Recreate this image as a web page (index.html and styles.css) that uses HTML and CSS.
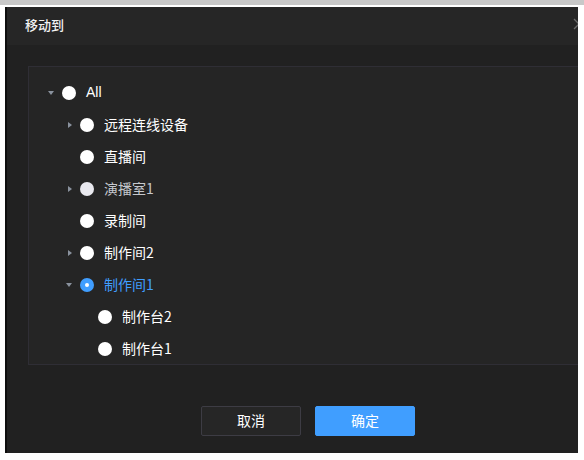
FILE: index.html
```html
<!DOCTYPE html>
<html lang="zh-CN">
<head>
    <meta charset="UTF-8">
    <meta name="viewport" content="width=device-width, initial-scale=1.0">
    <title>移动到</title>
    <link rel="stylesheet" href="styles.css">
</head>
<body>
    <div class="top-bar"></div>
    <div class="dialog">
        <div class="dialog-header">
            <span class="dialog-title">移动到</span>
            <svg class="close-icon" width="12" height="12" viewBox="0 0 12 12">
                <path d="M1 1 L11 11 M11 1 L1 11" stroke="#6b6b6b" stroke-width="1.3" fill="none"/>
            </svg>
        </div>
        <div class="dialog-body">
            <div class="tree">
                <div class="tree-node level-0">
                    <span class="caret caret-down"></span>
                    <span class="radio"></span>
                    <span class="label label-latin">All</span>
                </div>
                <div class="tree-node level-1">
                    <span class="caret caret-right"></span>
                    <span class="radio"></span>
                    <span class="label">远程连线设备</span>
                </div>
                <div class="tree-node level-1">
                    <span class="caret"></span>
                    <span class="radio"></span>
                    <span class="label">直播间</span>
                </div>
                <div class="tree-node level-1 hover">
                    <span class="caret caret-right"></span>
                    <span class="radio"></span>
                    <span class="label">演播室1</span>
                </div>
                <div class="tree-node level-1">
                    <span class="caret"></span>
                    <span class="radio"></span>
                    <span class="label">录制间</span>
                </div>
                <div class="tree-node level-1">
                    <span class="caret caret-right"></span>
                    <span class="radio"></span>
                    <span class="label">制作间2</span>
                </div>
                <div class="tree-node level-1 checked">
                    <span class="caret caret-down"></span>
                    <span class="radio"></span>
                    <span class="label">制作间1</span>
                </div>
                <div class="tree-node level-2">
                    <span class="caret"></span>
                    <span class="radio"></span>
                    <span class="label">制作台2</span>
                </div>
                <div class="tree-node level-2">
                    <span class="caret"></span>
                    <span class="radio"></span>
                    <span class="label">制作台1</span>
                </div>
            </div>
        </div>
        <div class="dialog-footer">
            <button class="btn btn-cancel">取消</button>
            <button class="btn btn-primary">确定</button>
        </div>
    </div>
</body>
</html>
```

FILE: styles.css
```css
body {
    margin: 0;
    padding: 0;
    background-color: #fff;
    font-family: "Noto Sans CJK SC", "Liberation Sans", sans-serif;
    font-size: 14px;
    overflow: hidden;
}
.top-bar {
    height: 5px;
    background-color: #c8c8c8;
}
.dialog {
    margin: 2px 0 0 5px;
    width: 573px;
    height: 446px;
    background-color: #212121;
    border-left: 2px solid #0e0e0e;
    box-sizing: border-box;
    overflow: hidden;
    display: flex;
    flex-direction: column;
}
.dialog-header {
    height: 38px;
    flex-shrink: 0;
    box-sizing: border-box;
    background-color: #262626;
    display: flex;
    align-items: center;
    justify-content: space-between;
    padding: 0 0 4px 18px;
}
.dialog-title {
    color: #f2f2f2;
    font-size: 13px;
    font-weight: 500;
}
.close-icon {
    margin-right: -7px;
}
.dialog-body {
    padding: 21px 0 0 21px;
}
.tree {
    width: 600px;
    height: 299px;
    box-sizing: border-box;
    border: 1px solid #2f2e35;
    background-color: #252525;
    padding-top: 10px;
    overflow: hidden;
}
.tree-node {
    display: flex;
    align-items: center;
    height: 32px;
    padding-left: 15px;
    color: #fff;
}
.tree-node.level-1 {
    padding-left: 33px;
}
.tree-node.level-2 {
    padding-left: 51px;
}
.caret {
    width: 14px;
    height: 14px;
    margin-right: 4px;
    position: relative;
}
.caret-down::after {
    content: "";
    position: absolute;
    left: 4px;
    top: 5px;
    border-left: 3px solid transparent;
    border-right: 3px solid transparent;
    border-top: 4px solid #8a929e;
}
.caret-right::after {
    content: "";
    position: absolute;
    left: 6px;
    top: 4px;
    border-top: 3px solid transparent;
    border-bottom: 3px solid transparent;
    border-left: 4px solid #8a929e;
}
.radio {
    width: 14px;
    height: 14px;
    border-radius: 50%;
    background-color: #fff;
    margin-right: 10px;
    box-sizing: border-box;
    display: flex;
    align-items: center;
    justify-content: center;
}
.label {
    line-height: 30px;
    padding-bottom: 2px;
    font-size: 14px;
}
.label-latin {
    font-family: "Liberation Sans", Arial, sans-serif;
    font-size: 14px;
}
.tree-node.hover .label {
    color: #c6c8cd;
}
.tree-node.hover .radio {
    background-color: #e9e9ef;
}
.tree-node.checked .label {
    color: #409eff;
}
.tree-node.checked .radio {
    background-color: #409eff;
}
.tree-node.checked .radio::after {
    content: "";
    width: 4px;
    height: 4px;
    border-radius: 50%;
    background-color: #fff;
}
.dialog-footer {
    margin-top: auto;
    display: flex;
    gap: 14px;
    padding: 0 0 17px 194px;
}
.btn {
    width: 100px;
    height: 30px;
    padding: 0 0 2px;
    font-family: "Noto Sans CJK SC", sans-serif;
    font-size: 14px;
    color: #fff;
    border-radius: 2px;
    cursor: pointer;
}
.btn-cancel {
    background-color: #262626;
    border: 1px solid #3d3c44;
}
.btn-primary {
    background-color: #409eff;
    border: 1px solid #409eff;
}
```
